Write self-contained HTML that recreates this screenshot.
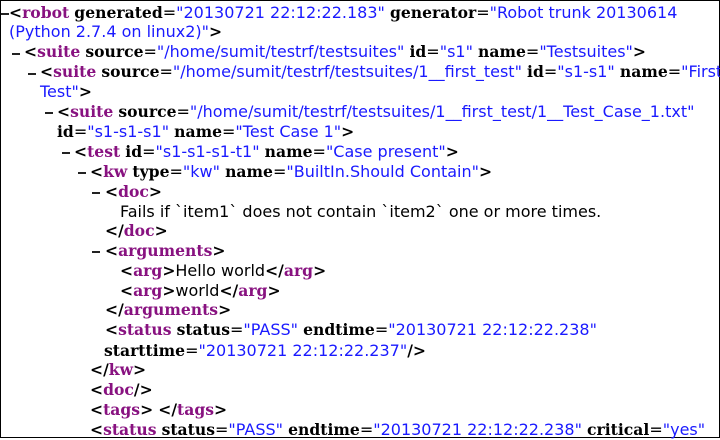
<html><head><style>
body{margin:0;width:720px;height:438px;overflow:hidden;background:#fff}
#f{position:absolute;left:0;top:0;width:718px;height:436px;border:1px solid #000}
.l{position:absolute;white-space:nowrap;font:16px "DejaVu Sans",sans-serif;color:#000;line-height:20px}
.t{font-family:"DejaVu Serif",serif;font-weight:bold;color:#881280;font-size:15.6px}
.a{font-family:"DejaVu Serif",serif;font-weight:bold;color:#000;font-size:15.6px}
.v{color:#1a1aff}
.p{font-family:"DejaVu Serif",serif;font-weight:bold;color:#000;font-size:15.6px}
.d{position:absolute;width:8px;height:1.5px;background:#222}
</style></head><body><div id="f"></div>
<div class="d" style="left:1px;top:13px"></div>
<div class="l" style="left:9px;top:3px"><span class="p">&lt;</span><span class="t">robot</span> <span class="a">generated</span>=<span class="v">"20130721 22:12:22.183"</span> <span class="a">generator</span>=<span class="v">"Robot trunk 20130614</span></div>
<div class="l" style="left:9px;top:22px"><span class="v">(Python 2.7.4 on linux2)"</span><span class="p">&gt;</span></div>
<div class="d" style="left:12px;top:53px"></div>
<div class="l" style="left:24px;top:42px"><span class="p">&lt;</span><span class="t">suite</span> <span class="a">source</span>=<span class="v">"/home/sumit/testrf/testsuites"</span> <span class="a">id</span>=<span class="v">"s1"</span> <span class="a">name</span>=<span class="v">"Testsuites"</span><span class="p">&gt;</span></div>
<div class="d" style="left:28px;top:73px"></div>
<div class="l" style="left:40px;top:62px"><span class="p">&lt;</span><span class="t">suite</span> <span class="a">source</span>=<span class="v">"/home/sumit/testrf/testsuites/1__first_test"</span> <span class="a">id</span>=<span class="v">"s1-s1"</span> <span class="a">name</span>=<span class="v">"First</span></div>
<div class="l" style="left:40px;top:82px"><span class="v">Test"</span><span class="p">&gt;</span></div>
<div class="d" style="left:45px;top:112px"></div>
<div class="l" style="left:57px;top:102px"><span class="p">&lt;</span><span class="t">suite</span> <span class="a">source</span>=<span class="v">"/home/sumit/testrf/testsuites/1__first_test/1__Test_Case_1.txt"</span></div>
<div class="l" style="left:57px;top:122px"><span class="a">id</span>=<span class="v">"s1-s1-s1"</span> <span class="a">name</span>=<span class="v">"Test Case 1"</span><span class="p">&gt;</span></div>
<div class="d" style="left:62px;top:152px"></div>
<div class="l" style="left:74px;top:142px"><span class="p">&lt;</span><span class="t">test</span> <span class="a">id</span>=<span class="v">"s1-s1-s1-t1"</span> <span class="a">name</span>=<span class="v">"Case present"</span><span class="p">&gt;</span></div>
<div class="d" style="left:78px;top:172px"></div>
<div class="l" style="left:90px;top:162px"><span class="p">&lt;</span><span class="t">kw</span> <span class="a">type</span>=<span class="v">"kw"</span> <span class="a">name</span>=<span class="v">"BuiltIn.Should Contain"</span><span class="p">&gt;</span></div>
<div class="d" style="left:92px;top:192px"></div>
<div class="l" style="left:105px;top:182px"><span class="p">&lt;</span><span class="t">doc</span><span class="p">&gt;</span></div>
<div class="l" style="left:120px;top:202px">Fails if `item1` does not contain `item2` one or more times.</div>
<div class="l" style="left:105px;top:221px"><span class="p">&lt;/</span><span class="t">doc</span><span class="p">&gt;</span></div>
<div class="d" style="left:92px;top:251px"></div>
<div class="l" style="left:105px;top:241px"><span class="p">&lt;</span><span class="t">arguments</span><span class="p">&gt;</span></div>
<div class="l" style="left:120px;top:261px"><span class="p">&lt;</span><span class="t">arg</span><span class="p">&gt;</span>Hello world<span class="p">&lt;/</span><span class="t">arg</span><span class="p">&gt;</span></div>
<div class="l" style="left:120px;top:281px"><span class="p">&lt;</span><span class="t">arg</span><span class="p">&gt;</span>world<span class="p">&lt;/</span><span class="t">arg</span><span class="p">&gt;</span></div>
<div class="l" style="left:105px;top:300px"><span class="p">&lt;/</span><span class="t">arguments</span><span class="p">&gt;</span></div>
<div class="l" style="left:105px;top:320px"><span class="p">&lt;</span><span class="t">status</span> <span class="a">status</span>=<span class="v">"PASS"</span> <span class="a">endtime</span>=<span class="v">"20130721 22:12:22.238"</span></div>
<div class="l" style="left:104px;top:341px"><span class="a">starttime</span>=<span class="v">"20130721 22:12:22.237"</span><span class="p">/&gt;</span></div>
<div class="l" style="left:90px;top:360px"><span class="p">&lt;/</span><span class="t">kw</span><span class="p">&gt;</span></div>
<div class="l" style="left:90px;top:380px"><span class="p">&lt;</span><span class="t">doc</span><span class="p">/&gt;</span></div>
<div class="l" style="left:90px;top:400px"><span class="p">&lt;</span><span class="t">tags</span><span class="p">&gt;</span> <span class="p">&lt;/</span><span class="t">tags</span><span class="p">&gt;</span></div>
<div class="l" style="left:90px;top:420px"><span class="p">&lt;</span><span class="t">status</span> <span class="a">status</span>=<span class="v">"PASS"</span> <span class="a">endtime</span>=<span class="v">"20130721 22:12:22.238"</span> <span class="a">critical</span>=<span class="v">"yes"</span></div>
</body></html>
